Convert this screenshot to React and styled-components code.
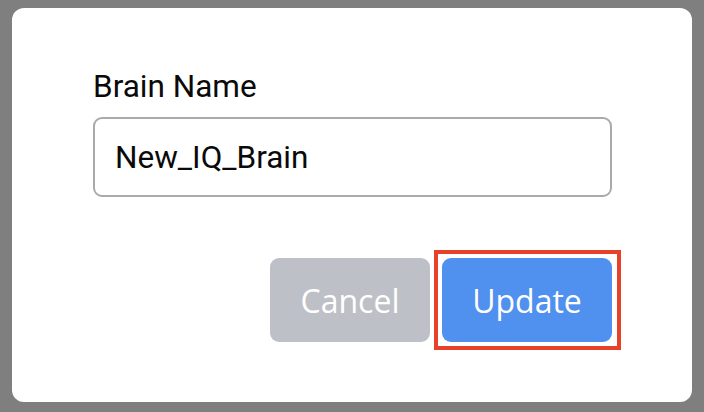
import React from "react";
import styled, { createGlobalStyle } from "styled-components";

const Global = createGlobalStyle`
  html, body { margin: 0; padding: 0; background: #7f7f7f; }
  body { width: 704px; height: 412px; overflow: hidden; }
`;

const Backdrop = styled.div`
  width: 704px;
  height: 412px;
  box-sizing: border-box;
  padding: 8px 12px 10px 12px;
  background: #7f7f7f;
`;

const Card = styled.div`
  height: 394px;
  box-sizing: border-box;
  background: #ffffff;
  border-radius: 12px;
  padding: 61px 80px 0 81px;
  display: flex;
  flex-direction: column;
`;

const Label = styled.label`
  font-family: Roboto, "Liberation Sans", sans-serif;
  font-size: 31.5px;
  line-height: 36px;
  color: #0a0a0a;
`;

const Input = styled.input`
  margin-top: 12px;
  height: 80px;
  box-sizing: border-box;
  width: 100%;
  border: 2px solid #aaaaaa;
  border-radius: 9px;
  padding: 0 20px;
  font-family: Roboto, "Liberation Sans", sans-serif;
  font-size: 31.5px;
  color: #0a0a0a;
  background: #fff;
  outline: none;
`;

const Actions = styled.div`
  margin-top: 53px;
  margin-right: -9px;
  display: flex;
  justify-content: flex-end;
  align-items: center;
  gap: 4px;
`;

const Button = styled.button`
  height: 84px;
  min-width: ${(p) => p.$w}px;
  box-sizing: border-box;
  border: none;
  border-radius: 9px;
  padding: 0 28px;
  font-family: "Open Sans", "Noto Sans", sans-serif;
  font-size: 32px;
  color: #ffffff;
  background: ${(p) => (p.$primary ? "#5090ee" : "#bdc1c7")};
  cursor: pointer;
`;

const Highlight = styled.div`
  display: flex;
  border: 4px solid #e8412a;
  padding: 4px 5px 4px 4px;
`;

export default function App() {
  return (
    <>
      <Global />
      <Backdrop>
        <Card>
          <Label htmlFor="brain-name">Brain Name</Label>
          <Input id="brain-name" defaultValue="New_IQ_Brain" />
          <Actions>
            <Button $w={160}>Cancel</Button>
            <Highlight>
              <Button $w={170} $primary>
                Update
              </Button>
            </Highlight>
          </Actions>
        </Card>
      </Backdrop>
    </>
  );
}
